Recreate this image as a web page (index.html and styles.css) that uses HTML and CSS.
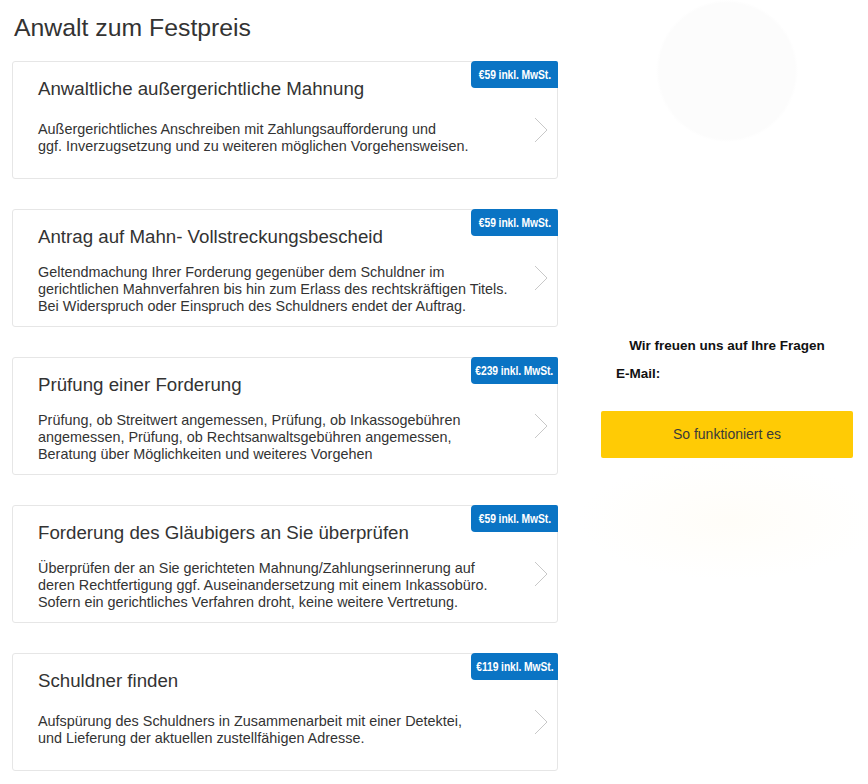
FILE: index.html
```html
<!DOCTYPE html>
<html lang="de">
<head>
<meta charset="utf-8">
<title>Anwalt zum Festpreis</title>
<link rel="stylesheet" href="styles.css">
</head>
<body>
<div class="page">
  <main class="main">
    <h1 class="page-title">Anwalt zum Festpreis</h1>
    <div class="cards">
      <div class="card">
        <div class="card-body">
          <h2 class="card-title">Anwaltliche außergerichtliche Mahnung</h2>
          <p class="card-text card-text--two">Außergerichtliches Anschreiben mit Zahlungsaufforderung und<br>ggf. Inverzugsetzung und zu weiteren möglichen Vorgehensweisen.</p>
        </div>
        <svg class="chevron" width="14" height="26" viewBox="0 0 14 26"><polyline points="1,1 13,13 1,25" fill="none" stroke="#c8c8c8" stroke-width="1"/></svg>
        <span class="badge"><span class="badge-text">€59 inkl. MwSt.</span></span>
      </div>
      <div class="card">
        <div class="card-body">
          <h2 class="card-title">Antrag auf Mahn- Vollstreckungsbescheid</h2>
          <p class="card-text">Geltendmachung Ihrer Forderung gegenüber dem Schuldner im<br>gerichtlichen Mahnverfahren bis hin zum Erlass des rechtskräftigen Titels.<br>Bei Widerspruch oder Einspruch des Schuldners endet der Auftrag.</p>
        </div>
        <svg class="chevron" width="14" height="26" viewBox="0 0 14 26"><polyline points="1,1 13,13 1,25" fill="none" stroke="#c8c8c8" stroke-width="1"/></svg>
        <span class="badge"><span class="badge-text">€59 inkl. MwSt.</span></span>
      </div>
      <div class="card">
        <div class="card-body">
          <h2 class="card-title">Prüfung einer Forderung</h2>
          <p class="card-text">Prüfung, ob Streitwert angemessen, Prüfung, ob Inkassogebühren<br>angemessen, Prüfung, ob Rechtsanwaltsgebühren angemessen,<br>Beratung über Möglichkeiten und weiteres Vorgehen</p>
        </div>
        <svg class="chevron" width="14" height="26" viewBox="0 0 14 26"><polyline points="1,1 13,13 1,25" fill="none" stroke="#c8c8c8" stroke-width="1"/></svg>
        <span class="badge"><span class="badge-text">€239 inkl. MwSt.</span></span>
      </div>
      <div class="card">
        <div class="card-body">
          <h2 class="card-title">Forderung des Gläubigers an Sie überprüfen</h2>
          <p class="card-text">Überprüfen der an Sie gerichteten Mahnung/Zahlungserinnerung auf<br>deren Rechtfertigung ggf. Auseinandersetzung mit einem Inkassobüro.<br>Sofern ein gerichtliches Verfahren droht, keine weitere Vertretung.</p>
        </div>
        <svg class="chevron" width="14" height="26" viewBox="0 0 14 26"><polyline points="1,1 13,13 1,25" fill="none" stroke="#c8c8c8" stroke-width="1"/></svg>
        <span class="badge"><span class="badge-text">€59 inkl. MwSt.</span></span>
      </div>
      <div class="card">
        <div class="card-body">
          <h2 class="card-title">Schuldner finden</h2>
          <p class="card-text card-text--two">Aufspürung des Schuldners in Zusammenarbeit mit einer Detektei,<br>und Lieferung der aktuellen zustellfähigen Adresse.</p>
        </div>
        <svg class="chevron" width="14" height="26" viewBox="0 0 14 26"><polyline points="1,1 13,13 1,25" fill="none" stroke="#c8c8c8" stroke-width="1"/></svg>
        <span class="badge"><span class="badge-text">€119 inkl. MwSt.</span></span>
      </div>
    </div>
  </main>
  <aside class="sidebar">
    <p class="contact-lead">Wir freuen uns auf Ihre Fragen</p>
    <p class="contact-mail">E-Mail:</p>
    <a class="cta" href="#">So funktioniert es</a>
  </aside>
</div>
</body>
</html>
```
FILE: styles.css
```css
* { box-sizing: border-box; }
html, body { margin: 0; padding: 0; background: #fff; }
body {
  font-family: "Liberation Sans", Arial, sans-serif;
  color: #333;
  width: 868px;
  height: 784px;
  overflow: hidden;
}
.page {
  display: flex;
  align-items: flex-start;
}
.main {
  width: 558px;
  padding-left: 12px;
}
.page-title {
  margin: 15px 0 20px 2px;
  font-size: 24.8px;
  line-height: 26px;
  font-weight: normal;
  color: #333;
}
.cards {
  display: flex;
  flex-direction: column;
  gap: 30px;
}
.card {
  position: relative;
  height: 118px;
  border: 1px solid #e6e6e6;
  border-radius: 3px;
  display: flex;
  align-items: flex-start;
  padding: 16px 9px 0 25px;
}
.card-body { flex: 1; }
.card-title {
  margin: 0;
  font-size: 18.7px;
  line-height: 22px;
  font-weight: normal;
  color: #333;
}
.card-text {
  margin: 16px 0 0;
  font-size: 14.4px;
  line-height: 17px;
  color: #333;
  white-space: nowrap;
}
.card-text--two { margin-top: 21px; }
.chevron {
  flex: none;
  margin-top: 39px;
}
.badge {
  position: absolute;
  top: -1px;
  right: -1px;
  width: 87px;
  height: 27px;
  background: #0a74c4;
  color: #fff;
  border-radius: 4px 2px 0 4px;
  display: flex;
  align-items: center;
  justify-content: center;
  overflow: hidden;
}
.badge-text {
  display: inline-block;
  white-space: nowrap;
  font-weight: bold;
  font-size: 12px;
  line-height: 14px;
  transform: scaleX(0.86);
  letter-spacing: -0.1px;
}
.sidebar {
  flex: 1;
  height: 784px;
  padding: 337px 15px 0 43px;
  background:
    radial-gradient(circle at 169px 71px, #fcfcfc 0, #fcfcfc 68px, rgba(255,255,255,0) 71px),
    radial-gradient(ellipse 150px 60px at 170px 520px, #fffdf8 0, rgba(255,255,255,0) 100%),
    #fff;
}
.contact-lead {
  margin: 0;
  text-align: center;
  font-size: 13.5px;
  line-height: 18px;
  font-weight: bold;
  color: #111;
}
.contact-mail {
  margin: 10px 0 0 15px;
  font-size: 13.5px;
  line-height: 18px;
  font-weight: bold;
  color: #111;
}
.cta {
  display: block;
  margin-top: 28px;
  height: 47px;
  line-height: 47px;
  background: #ffcb05;
  border-radius: 2px;
  text-align: center;
  font-size: 14px;
  color: #3a3a3a;
  text-decoration: none;
}
```
